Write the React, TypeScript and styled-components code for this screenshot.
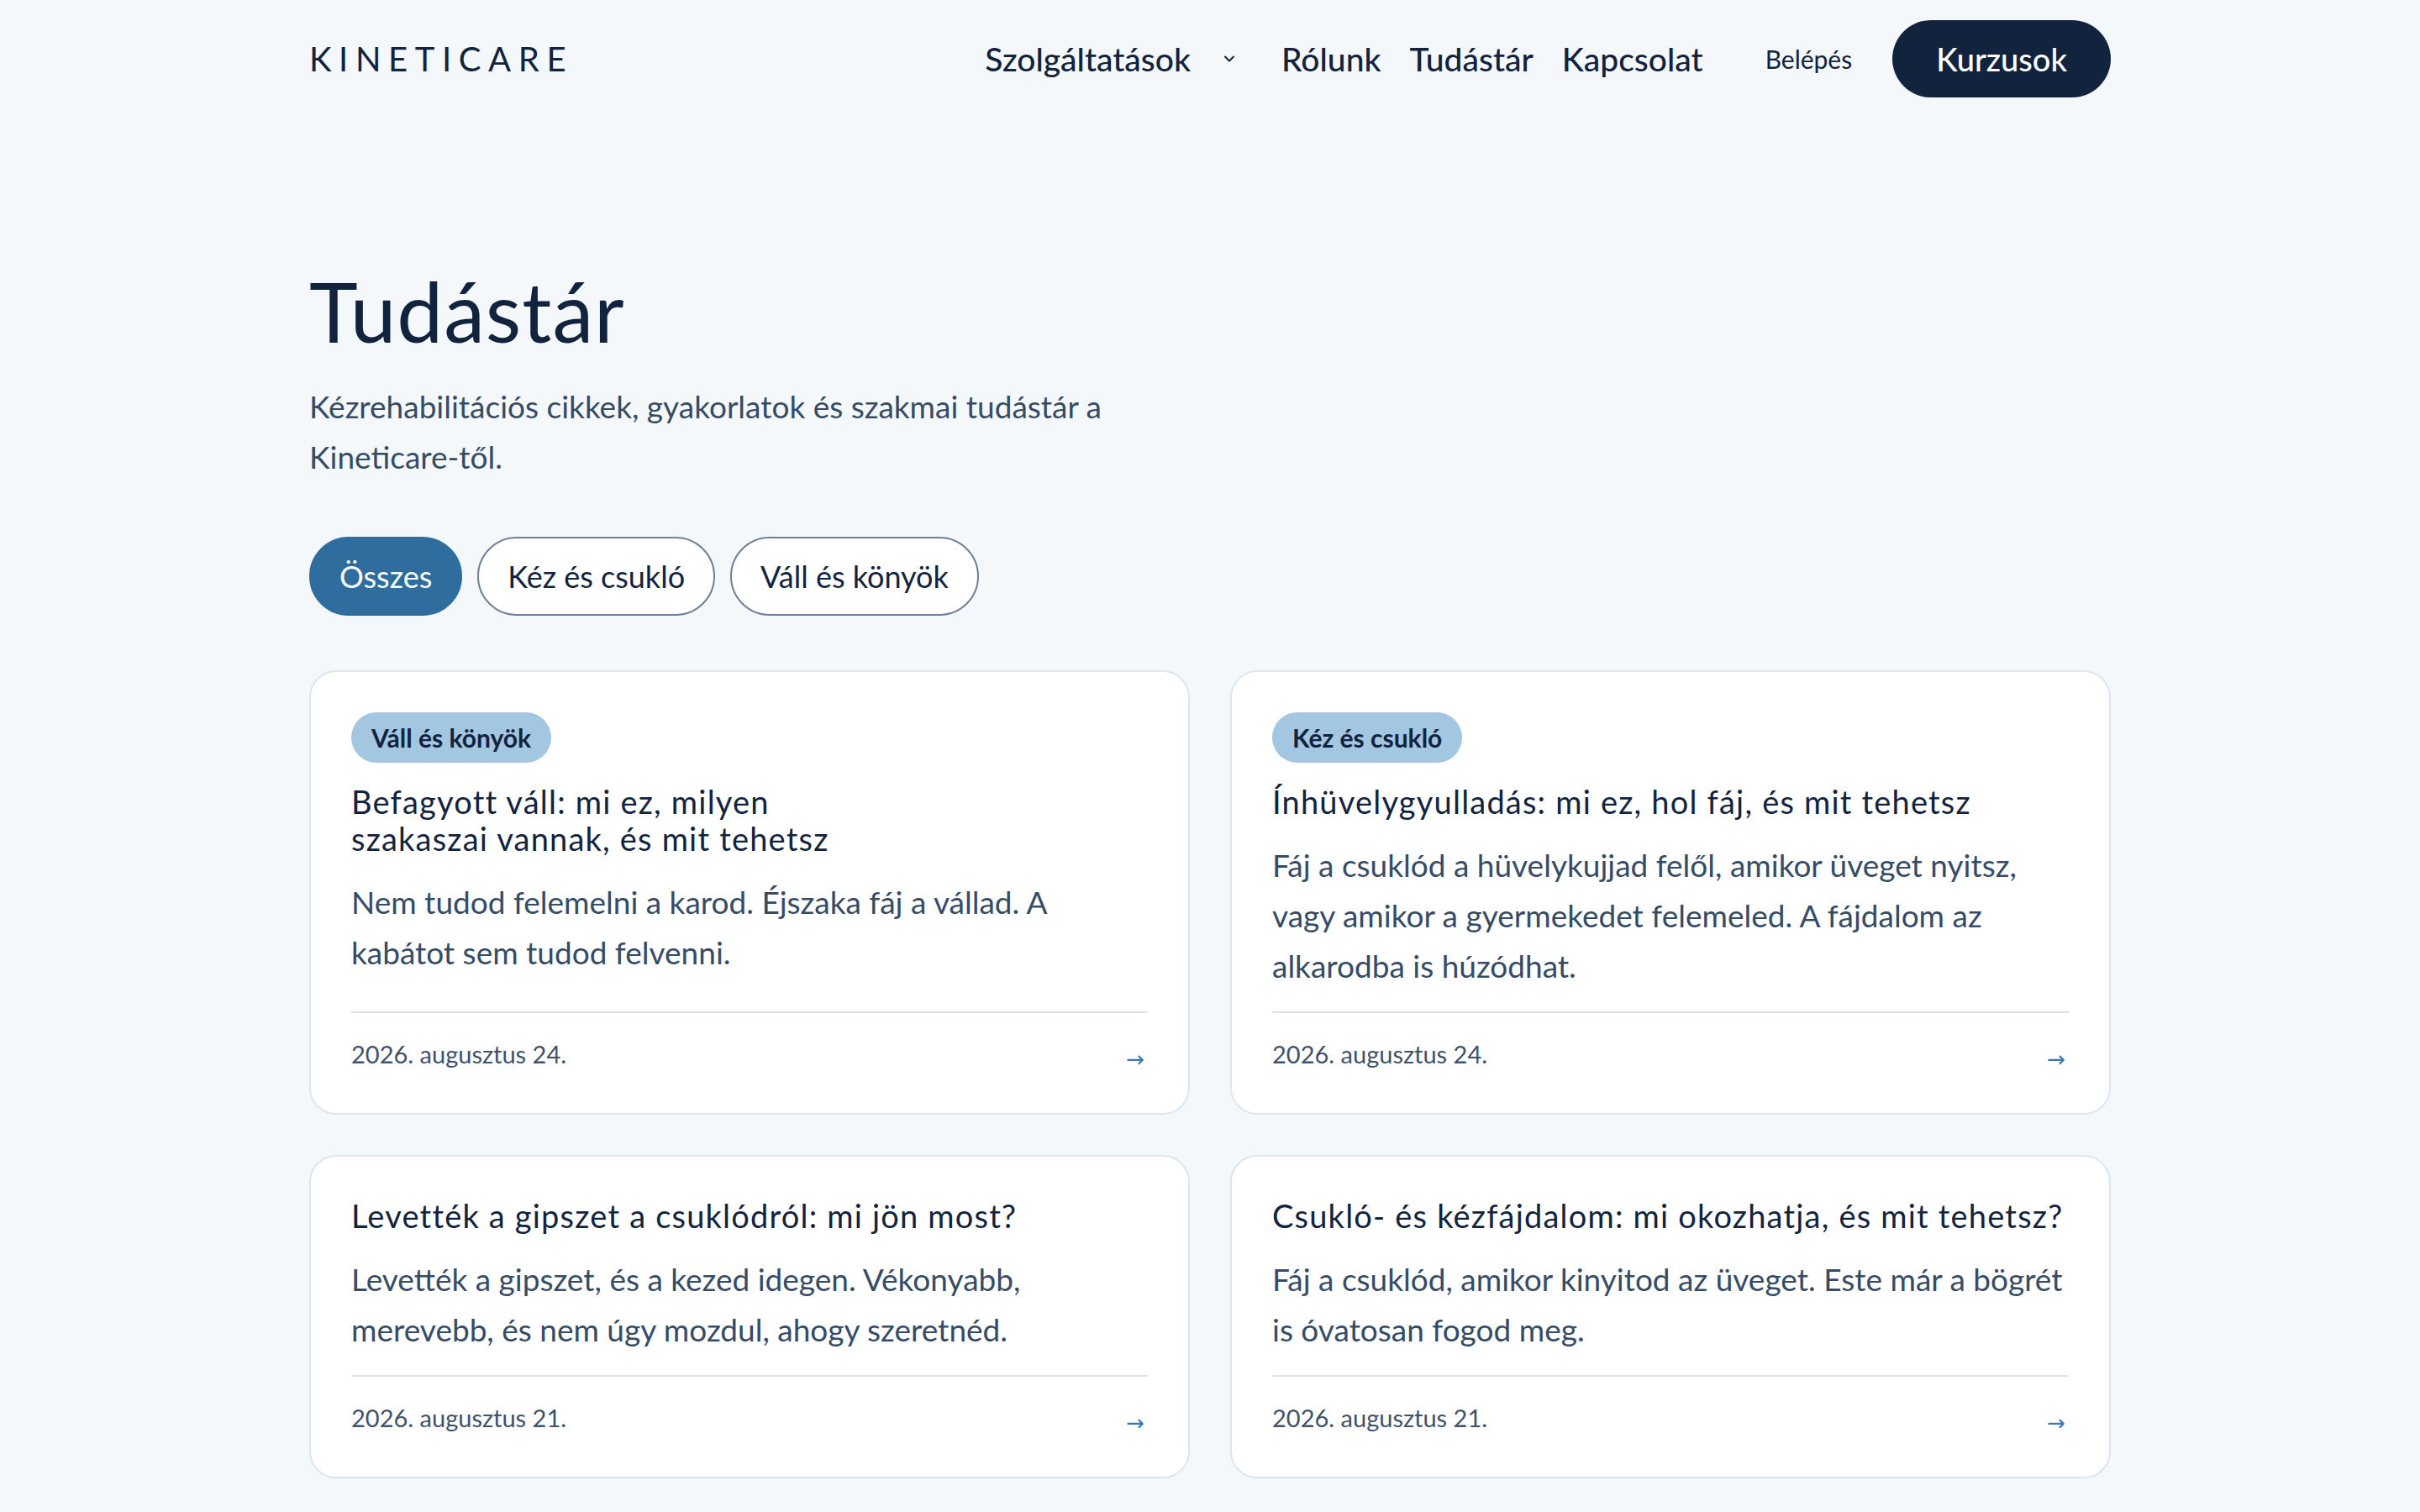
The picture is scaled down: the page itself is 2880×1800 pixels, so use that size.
import React from "react";
import styled, { createGlobalStyle } from "styled-components";
import { ChevronDown } from "lucide-react";

const GlobalStyle = createGlobalStyle`
  * { box-sizing: border-box; }
  html, body { margin: 0; padding: 0; }
  body {
    background: #f4f8fb;
    color: #12233e;
    font-family: Lato, "Noto Sans", sans-serif;
    -webkit-font-smoothing: antialiased;
  }
`;

type Article = {
  tag?: string;
  title: string;
  excerpt: string;
  date: string;
};

const articles: Article[] = [
  {
    tag: "Váll és könyök",
    title: "Befagyott váll: mi ez, milyen szakaszai vannak, és mit tehetsz",
    excerpt: "Nem tudod felemelni a karod. Éjszaka fáj a vállad. A kabátot sem tudod felvenni.",
    date: "2026. augusztus 24.",
  },
  {
    tag: "Kéz és csukló",
    title: "Ínhüvelygyulladás: mi ez, hol fáj, és mit tehetsz",
    excerpt:
      "Fáj a csuklód a hüvelykujjad felől, amikor üveget nyitsz, vagy amikor a gyermekedet felemeled. A fájdalom az alkarodba is húzódhat.",
    date: "2026. augusztus 24.",
  },
  {
    title: "Levették a gipszet a csuklódról: mi jön most?",
    excerpt: "Levették a gipszet, és a kezed idegen. Vékonyabb, merevebb, és nem úgy mozdul, ahogy szeretnéd.",
    date: "2026. augusztus 21.",
  },
  {
    title: "Csukló- és kézfájdalom: mi okozhatja, és mit tehetsz?",
    excerpt: "Fáj a csuklód, amikor kinyitod az üveget. Este már a bögrét is óvatosan fogod meg.",
    date: "2026. augusztus 21.",
  },
];

const filters = ["Összes", "Kéz és csukló", "Váll és könyök"];

export default function App() {
  return (
    <>
      <GlobalStyle />
      <Page>
        <Header>
          <Container>
            <HeaderRow>
              <Logo>KINETICARE</Logo>
              <Nav>
                <NavLink>
                  Szolgáltatások
                  <Chevron>
                    <ChevronDown size={20} strokeWidth={2.4} />
                  </Chevron>
                </NavLink>
                <NavLink>Rólunk</NavLink>
                <NavLink>Tudástár</NavLink>
                <NavLink>Kapcsolat</NavLink>
                <Actions>
                  <LoginLink>Belépés</LoginLink>
                  <CtaButton>Kurzusok</CtaButton>
                </Actions>
              </Nav>
            </HeaderRow>
          </Container>
        </Header>

        <Main>
          <Container>
            <Title>Tudástár</Title>
            <Lead>Kézrehabilitációs cikkek, gyakorlatok és szakmai tudástár a Kineticare-től.</Lead>

            <Filters>
              {filters.map((f, i) => (
                <FilterPill key={f} active={i === 0}>
                  {f}
                </FilterPill>
              ))}
            </Filters>

            <Grid>
              {articles.map((a) => (
                <Card key={a.title}>
                  {a.tag && <Tag>{a.tag}</Tag>}
                  <CardTitle>{a.title}</CardTitle>
                  <Excerpt>{a.excerpt}</Excerpt>
                  <CardFooter>
                    <DateText>{a.date}</DateText>
                    <Arrow>→</Arrow>
                  </CardFooter>
                </Card>
              ))}
            </Grid>
          </Container>
        </Main>
      </Page>
    </>
  );
}

const Page = styled.div`
  min-height: 100vh;
  background: #f4f8fb;
`;

const Container = styled.div`
  max-width: 2240px;
  margin: 0 auto;
  padding: 0 48px;
`;

const Header = styled.header`
  padding: 24px 0;
`;

const HeaderRow = styled.div`
  display: flex;
  align-items: center;
  justify-content: space-between;
  height: 92px;
`;

const Logo = styled.div`
  font-family: Lato, sans-serif;
  font-weight: 400;
  font-size: 40px;
  letter-spacing: 8.6px;
  color: #12233e;
`;

const Nav = styled.nav`
  display: flex;
  align-items: center;
  gap: 34px;
`;

const NavLink = styled.a`
  display: flex;
  align-items: center;
  gap: 36px;
  font-size: 39px;
  font-weight: 500;
  color: #12233e;
  cursor: pointer;
`;

const Chevron = styled.span`
  display: inline-flex;
  margin-right: 18px;
  color: #12233e;
`;

const Actions = styled.div`
  display: flex;
  align-items: center;
  gap: 48px;
  margin-left: 40px;
`;

const LoginLink = styled.a`
  font-size: 30px;
  color: #12233e;
  cursor: pointer;
`;

const CtaButton = styled.button`
  height: 92px;
  padding: 0 52px;
  border: none;
  border-radius: 999px;
  background: #12233e;
  color: #ffffff;
  font-family: Lato, sans-serif;
  font-size: 38px;
  font-weight: 500;
  cursor: pointer;
`;

const Main = styled.main`
  padding: 172px 0 80px;
`;

const Title = styled.h1`
  margin: 0;
  font-size: 98px;
  font-weight: 400;
  line-height: 1.2;
  letter-spacing: 1px;
  color: #12233e;
`;

const Lead = styled.p`
  margin: 24px 0 0;
  max-width: 1000px;
  font-size: 37px;
  line-height: 60px;
  color: #364c66;
`;

const Filters = styled.div`
  display: flex;
  gap: 18px;
  margin-top: 65px;
`;

const FilterPill = styled.button<{ active?: boolean }>`
  height: 94px;
  padding: 0 34px;
  border-radius: 999px;
  border: 2px solid ${({ active }) => (active ? "#2f6d9f" : "#6d8097")};
  background: ${({ active }) => (active ? "#2f6d9f" : "#ffffff")};
  color: ${({ active }) => (active ? "#ffffff" : "#12233e")};
  font-family: Lato, sans-serif;
  font-size: 36px;
  cursor: pointer;
`;

const Grid = styled.div`
  display: grid;
  grid-template-columns: 1fr 1fr;
  gap: 48px 48px;
  margin-top: 65px;
`;

const Card = styled.article`
  display: flex;
  flex-direction: column;
  align-items: flex-start;
  gap: 24px;
  padding: 48px 48px 49px;
  background: #ffffff;
  border: 2px solid #dde6ef;
  border-radius: 32px;
`;

const Tag = styled.span`
  display: inline-flex;
  align-items: center;
  height: 60px;
  padding: 0 24px;
  border-radius: 999px;
  background: #a3c6e1;
  color: #12233e;
  font-size: 30px;
  font-weight: 700;
`;

const CardTitle = styled.h2`
  margin: 0;
  font-size: 38px;
  font-weight: 400;
  line-height: 44px;
  letter-spacing: 1.2px;
  color: #12233e;
  text-wrap: balance;
`;

const Excerpt = styled.p`
  margin: 0;
  font-size: 37px;
  line-height: 60px;
  color: #364c66;
`;

const CardFooter = styled.div`
  align-self: stretch;
  display: flex;
  align-items: center;
  justify-content: space-between;
  margin-top: auto;
  padding-top: 28px;
  border-top: 2px solid #dbe3ec;
`;

const DateText = styled.span`
  font-size: 29px;
  line-height: 40px;
  color: #3f5269;
`;

const Arrow = styled.span`
  margin-right: 4px;
  padding-top: 12px;
  font-family: "DejaVu Sans", sans-serif;
  font-size: 26px;
  color: #3f78b0;
`;
